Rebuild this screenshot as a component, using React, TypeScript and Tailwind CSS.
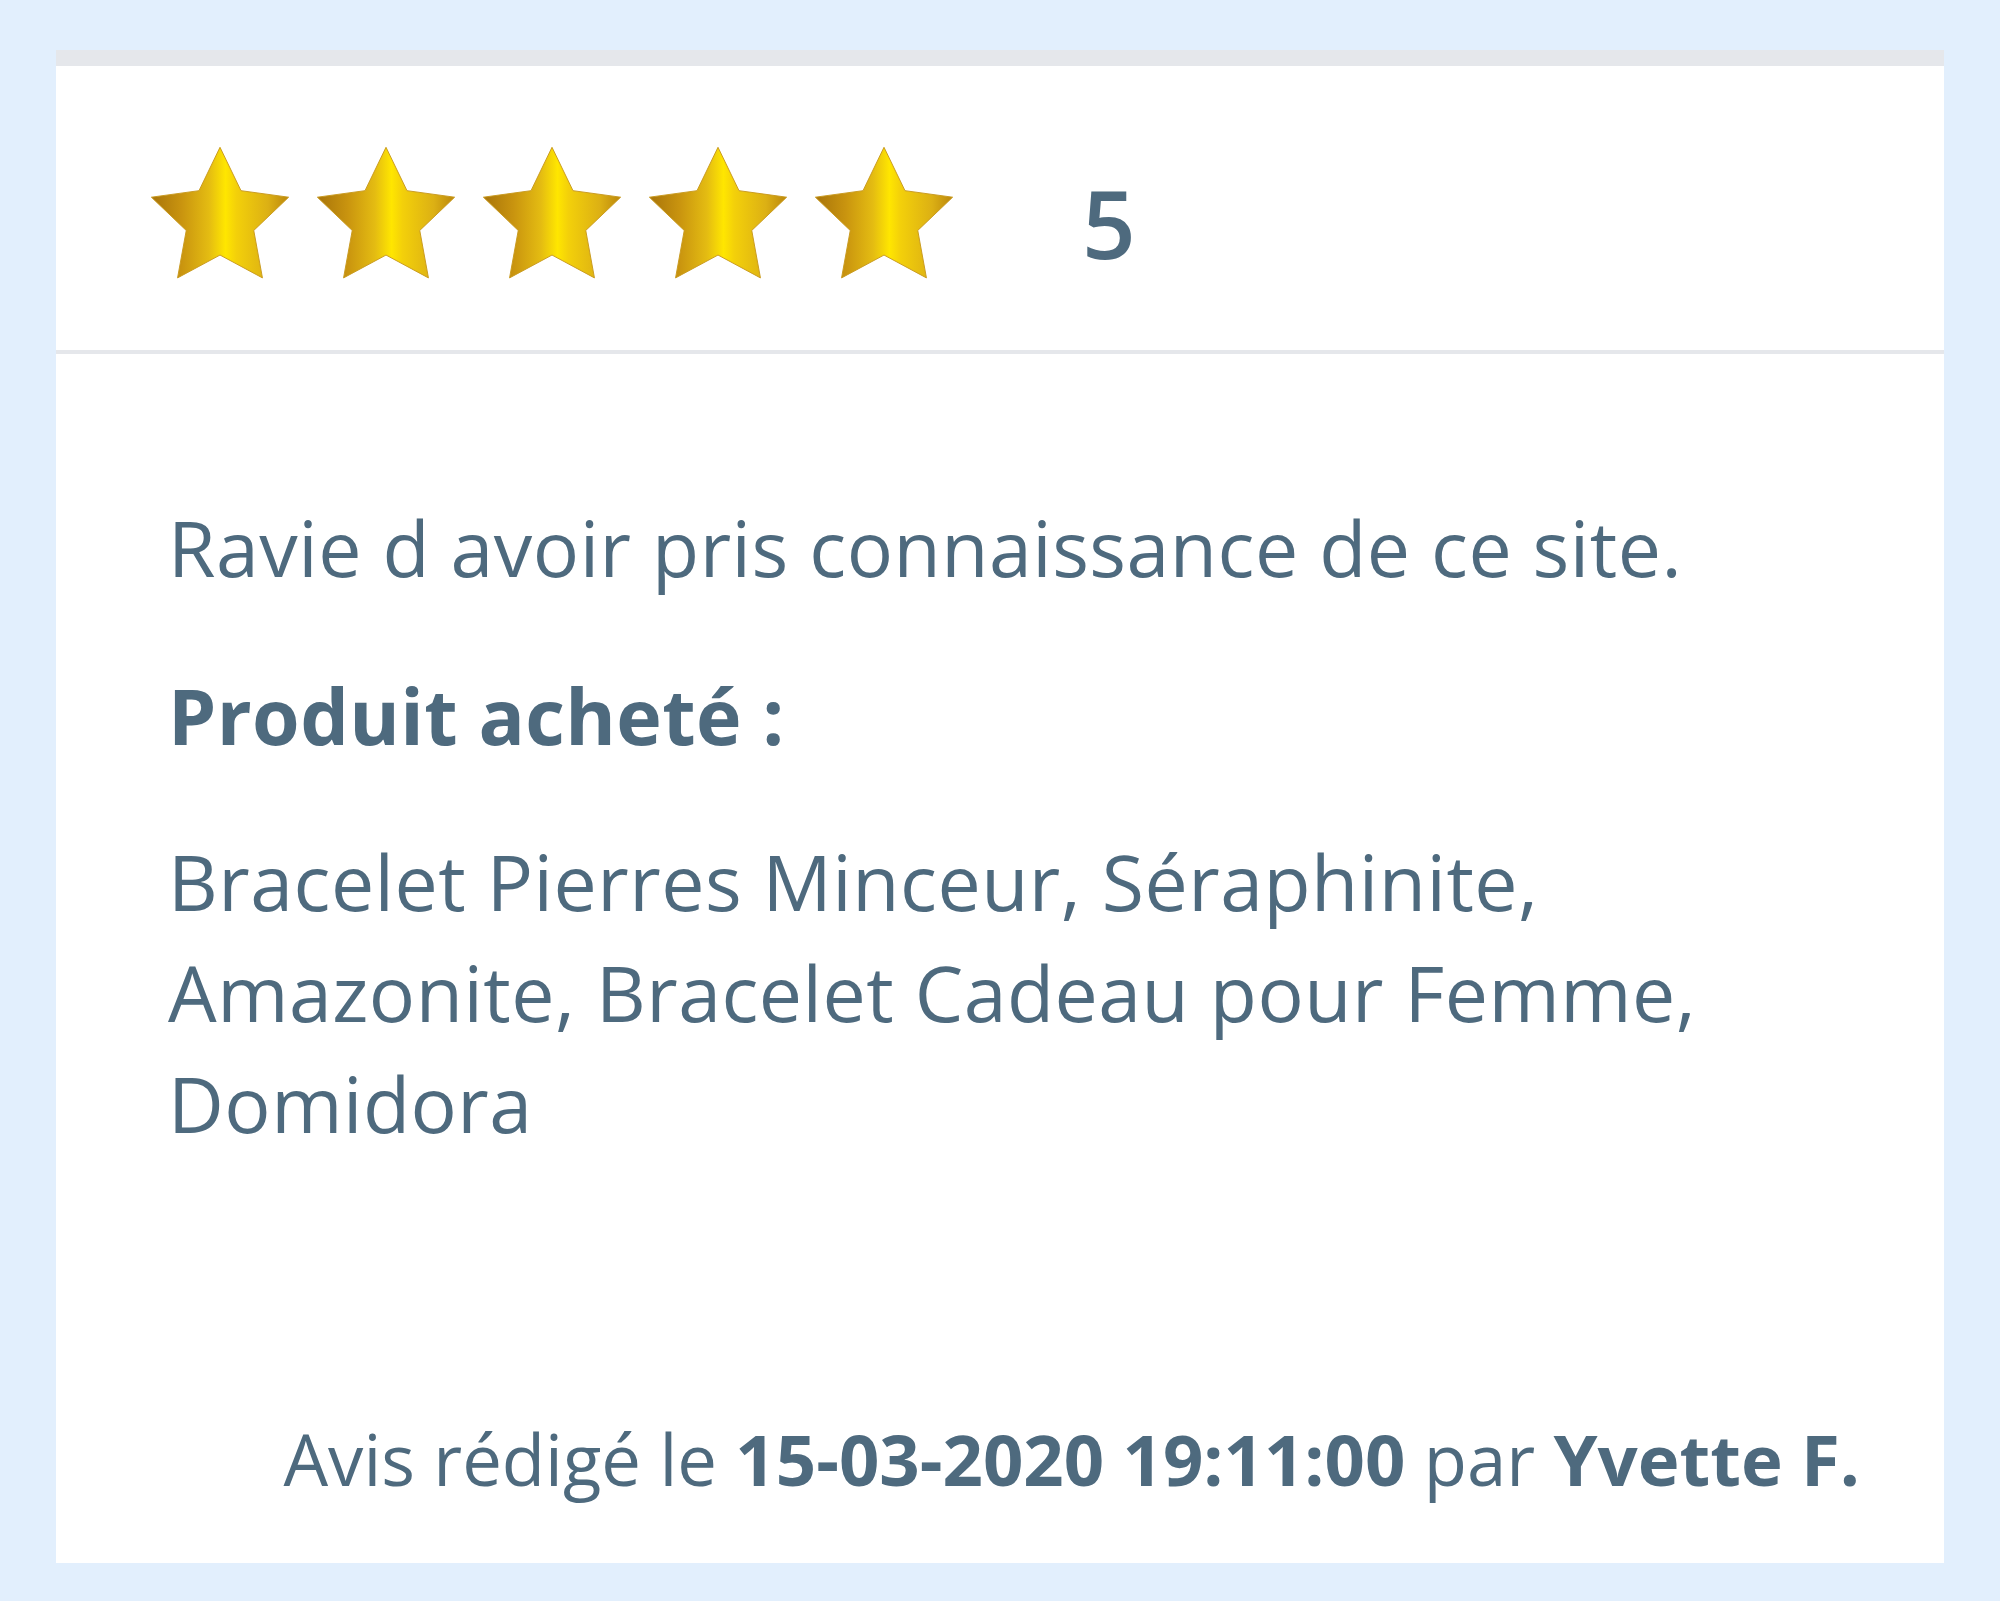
import React from "react";

function Star({ id }: { id: string }) {
  return (
    <svg width="140" height="135" viewBox="-1 -1 102 97" className="shrink-0">
      <defs>
        <linearGradient id={id} x1="0" y1="0" x2="1" y2="0">
          <stop offset="0" stopColor="#a8740a" />
          <stop offset="0.22" stopColor="#c9940f" />
          <stop offset="0.42" stopColor="#e4bc12" />
          <stop offset="0.54" stopColor="#ffe600" />
          <stop offset="0.62" stopColor="#f3d00a" />
          <stop offset="0.85" stopColor="#dcb014" />
          <stop offset="1" stopColor="#bb870c" />
        </linearGradient>
      </defs>
      <polygon
        points="50,0 65.3,31.6 100,36.35 74.6,60.6 80.92,95.15 50,78.5 19.08,95.15 25.4,60.6 0,36.35 34.7,31.6"
        fill={`url(#${id})`}
        stroke="#c99a1e"
        strokeWidth="0.7"
        strokeLinejoin="miter"
      />
    </svg>
  );
}

export default function App() {
  return (
    <div
      className="min-h-screen bg-[#e2effd] pt-[50px] px-[56px] pb-[38px]"
      style={{ fontFamily: '"Open Sans", "Noto Sans", sans-serif' }}
    >
      <div className="bg-white border-t-[16px] border-[#e5e7eb] h-[1513px] flex flex-col text-[#4e6a7e]">
        <div className="h-[288px] border-b-4 border-[#e5e7eb] flex items-center pl-[94px]">
          <div className="flex items-center gap-[26px] mt-[8px]">
            {[0, 1, 2, 3, 4].map((i) => (
              <Star key={i} id={`star-grad-${i}`} />
            ))}
          </div>
          <span className="ml-[128px] text-[94px] font-semibold leading-none mt-[30px]">5</span>
        </div>
        <div className="flex-1 flex flex-col pl-[112px] pr-[84px] pt-[138px] pb-[52px]">
          <p className="text-[77px] leading-[111px] tracking-[0.5px] mb-[57px]">
            Ravie d avoir pris connaissance de ce site.
          </p>
          <p className="text-[77px] leading-[111px] tracking-[0.4px] font-bold mb-[55px]">
            Produit acheté :
          </p>
          <p className="text-[77px] leading-[111px] tracking-[0.5px] max-w-[1640px]">
            Bracelet Pierres Minceur, Séraphinite, Amazonite, Bracelet Cadeau pour Femme, Domidora
          </p>
          <div className="mt-auto text-right text-[70.7px] leading-[105px]">
            Avis rédigé le <span className="font-bold">15-03-2020 19:11:00</span> par{" "}
            <span className="font-bold">Yvette F.</span>
          </div>
        </div>
      </div>
    </div>
  );
}
